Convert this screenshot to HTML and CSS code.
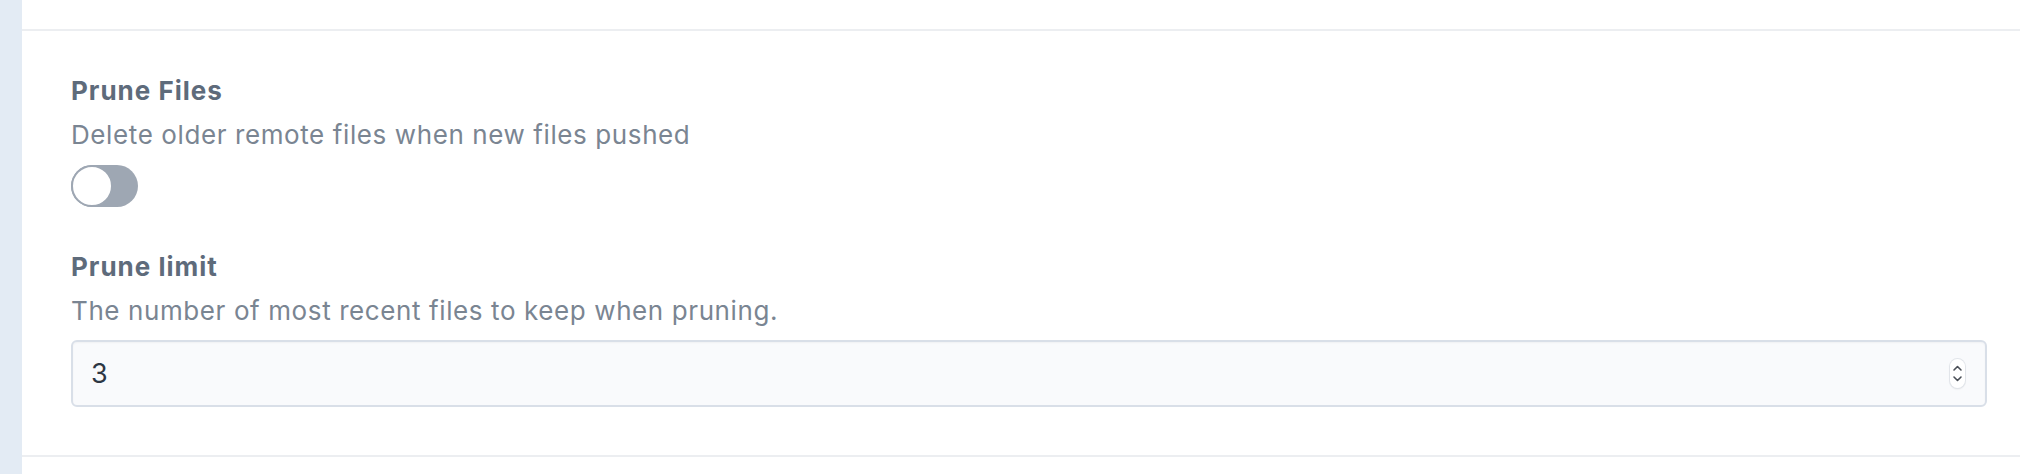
FILE: index.html
```html
<!DOCTYPE html>
<html lang="en">
<head>
<meta charset="utf-8">
<title>Prune settings</title>
<link rel="stylesheet" href="styles.css">
</head>
<body>
<div class="layout">
  <aside class="sidebar"></aside>
  <main class="main">
    <div class="topbar"></div>
    <section class="section">
      <div class="field">
        <div class="label">Prune Files</div>
        <div class="desc">Delete older remote files when new files pushed</div>
        <div class="toggle"><span class="knob"></span></div>
      </div>
      <div class="field field-limit">
        <div class="label">Prune limit</div>
        <div class="desc">The number of most recent files to keep when pruning.</div>
        <div class="input">
          <span class="value">3</span>
          <span class="spinner">
            <svg width="15" height="29" viewBox="0 0 15 29">
              <path d="M4 11 L7.5 7.5 L11 11" fill="none" stroke="#4a4f57" stroke-width="1.6" stroke-linecap="round" stroke-linejoin="round"/>
              <path d="M4 18 L7.5 21.5 L11 18" fill="none" stroke="#4a4f57" stroke-width="1.6" stroke-linecap="round" stroke-linejoin="round"/>
            </svg>
          </span>
        </div>
      </div>
    </section>
  </main>
</div>
</body>
</html>
```

FILE: styles.css
```css
html, body {
  margin: 0;
  padding: 0;
  background: #ffffff;
}
body {
  font-family: "Inter", "Noto Sans", "Liberation Sans", sans-serif;
  width: 2020px;
  height: 474px;
  overflow: hidden;
}
.layout {
  display: flex;
  height: 474px;
}
.sidebar {
  width: 22px;
  flex: none;
  background: #e3ebf4;
}
.main {
  flex: 1;
  display: flex;
  flex-direction: column;
}
.topbar {
  height: 29px;
  border-bottom: 2px solid #eceef1;
}
.section {
  padding: 42px 33px 48px 49px;
  border-bottom: 2px solid #eceef1;
}
.field {
  display: flex;
  flex-direction: column;
  align-items: flex-start;
}
.field-limit {
  margin-top: 42px;
}
.label {
  font-size: 26px;
  line-height: 36px;
  font-weight: 700;
  letter-spacing: 1px;
  color: #5e6b7b;
}
.desc {
  margin-top: 8px;
  font-size: 26px;
  line-height: 36px;
  letter-spacing: 0.6px;
  color: #7a8592;
}
.toggle {
  margin-top: 12px;
  width: 67px;
  height: 42px;
  border-radius: 21px;
  background: #9ea7b3;
  position: relative;
}
.knob {
  position: absolute;
  left: 0;
  top: 0;
  width: 42px;
  height: 42px;
  box-sizing: border-box;
  border-radius: 50%;
  background: #ffffff;
  border: 2px solid #9ea7b3;
}
.input {
  margin-top: 11px;
  align-self: stretch;
  height: 67px;
  box-sizing: border-box;
  border: 2px solid #d9dfe8;
  border-radius: 6px;
  background: #f9fafc;
  box-shadow: inset 0 1px 2px rgba(0,0,0,0.04);
  display: flex;
  align-items: center;
  justify-content: space-between;
  padding: 0 20px 0 18px;
}
.value {
  font-size: 27px;
  color: #2d3644;
}
.spinner {
  display: flex;
  width: 15px;
  height: 29px;
  border-radius: 8px;
  background: #ffffff;
  box-shadow: 0 0 0 1px #e2e5ea, 0 1px 2px rgba(0,0,0,0.12);
}
```
